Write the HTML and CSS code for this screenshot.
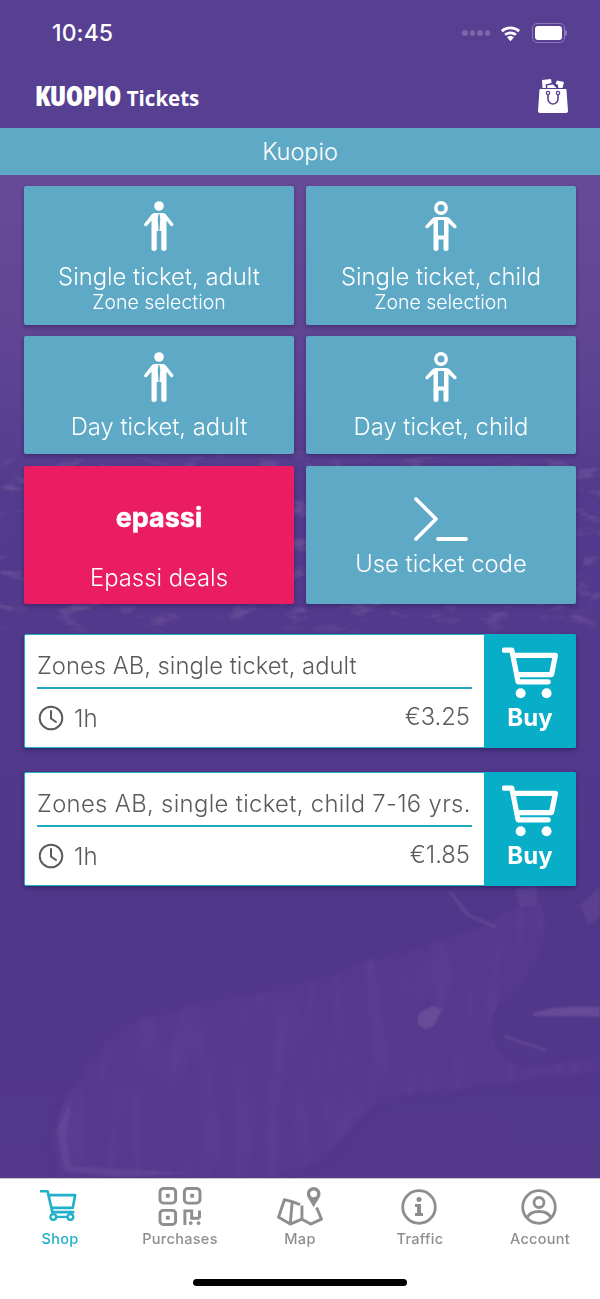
FILE: index.html
```html
<!DOCTYPE html>
<html lang="en">
<head>
<meta charset="utf-8">
<title>Kuopio Tickets</title>
<link rel="stylesheet" href="styles.css">
</head>
<body>
<svg width="0" height="0" class="defs">
  <defs>
    <symbol id="adult" viewBox="0 0 32 50">
      <circle cx="16" cy="5" r="4.800" fill="#fff"/>
      <path fill-rule="evenodd" d="M12.500 12h7c1.700 0 3 .8 4 2.200l6.500 8.300c.6.800.5 1.900-.3 2.400s-1.800.4-2.400-.3L23.500 19.500V48c0 1.200-1 2-2.500 2s-2.700-.8-2.700-2V30h-4.600v18c0 1.200-1 2-2.700 2S8.500 49.200 8.500 48V19.500l-4.300 5.100c-.6.7-1.600.8-2.400.3s-.9-1.600-.3-2.400l6.500-8.300c1-1.400 2.300-2.200 4-2.200zM15.500 13l-.8 5 .8 12h1l.8-12-.8-5z" fill="#fff"/>
    </symbol>
    <symbol id="child" viewBox="0 0 32 50">
      <circle cx="16" cy="7" r="5.200" fill="none" stroke="#fff" stroke-width="3.400"/>
      <path fill-rule="evenodd" d="M11 16h10c1.800 0 3.200.7 4.200 2l6 6.500c.6.800.5 1.800-.2 2.400s-1.700.5-2.300-.2L23.500 22v26c0 1.200-1 2-2.500 2s-2.500-.8-2.500-2v-9.500h-5V48c0 1.200-1 2-2.500 2s-2.500-.8-2.500-2V22L3.300 26.700c-.6.700-1.600.8-2.300.2s-.8-1.600-.2-2.400l6-6.500c1-1.300 2.400-2 4.200-2zM13 19v15.500h6V19z" fill="#fff"/>
    </symbol>
    <symbol id="cart" viewBox="0 0 54 50">
      <path d="M2 3h7.500l6 30.500h29" fill="none" stroke="currentColor" stroke-width="5" stroke-linecap="round" stroke-linejoin="round"/>
      <path d="M11 8h40.500l-3.700 18.500H14.500" fill="none" stroke="currentColor" stroke-width="5" stroke-linejoin="round"/>
      <circle cx="18" cy="44.500" r="4.800" fill="currentColor"/>
      <circle cx="43" cy="44.500" r="4.800" fill="currentColor"/>
    </symbol>
    <symbol id="clock" viewBox="0 0 26 26">
      <circle cx="13" cy="13" r="11.300" fill="none" stroke="currentColor" stroke-width="2"/>
      <path d="M13 6v7.500l5 3.500" fill="none" stroke="currentColor" stroke-width="2" stroke-linecap="round"/>
    </symbol>
  </defs>
</svg>
<div class="app">
  <svg class="backdrop" viewBox="0 0 600 1299" preserveAspectRatio="none" aria-hidden="true">
    <defs>
      <linearGradient id="wash" x1="0" y1="0" x2="0" y2="1">
        <stop offset="0" stop-color="#573f92"/>
        <stop offset=".14" stop-color="#684b98"/>
        <stop offset=".3" stop-color="#5c4391"/>
        <stop offset=".38" stop-color="#543a8c"/>
        <stop offset=".7" stop-color="#51378a"/>
        <stop offset="1" stop-color="#53388a"/>
      </linearGradient>
      <linearGradient id="bandfade" x1="0" y1="0" x2="0" y2="1">
        <stop offset="0" stop-color="#fff" stop-opacity="0"/>
        <stop offset=".15" stop-color="#fff"/>
        <stop offset=".85" stop-color="#fff"/>
        <stop offset="1" stop-color="#fff" stop-opacity="0"/>
      </linearGradient>
      <mask id="bandmask"><rect x="0" y="440" width="600" height="200" fill="url(#bandfade)"/></mask>
      <filter id="town" x="0" y="0" width="1" height="1" color-interpolation-filters="sRGB">
        <feTurbulence type="fractalNoise" baseFrequency="0.035 0.08" numOctaves="3" seed="7"/>
        <feColorMatrix values="0 0 0 0 .47  0 0 0 0 .37  0 0 0 0 .63  4 0 0 0 -2.200"/>
      </filter>
      <filter id="grain" x="0" y="0" width="1" height="1" color-interpolation-filters="sRGB">
        <feTurbulence type="fractalNoise" baseFrequency="0.06 0.012" numOctaves="2" seed="3"/>
        <feColorMatrix values="0 0 0 0 .37  0 0 0 0 .25  0 0 0 0 .59  2 0 0 0 -.9"/>
        <feComposite in2="SourceAlpha" operator="in"/>
        <feGaussianBlur stdDeviation="1"/>
      </filter>
      <filter id="soft"><feGaussianBlur stdDeviation="1"/></filter>
      <filter id="softer"><feGaussianBlur stdDeviation="3"/></filter>
    </defs>
    <rect width="600" height="1299" fill="url(#wash)"/>
    <rect x="0" y="440" width="600" height="200" filter="url(#town)" mask="url(#bandmask)" opacity=".6"/>
    <path filter="url(#softer)" fill="#573b8f" opacity=".8" d="M62 1178c-12-30-12-60 18-100 20-30 35-50 55-56 40-14 70-22 102-25 35-4 60-15 96-20 20-8 30-20 50-17 30-12 60-18 96-30 15-15 40-25 57-30 20 20 0 70-24 90-15 14-30 30-15 60 8 18 40 20 60 14l43-5v12c-30 2-70 8-102 12-35 6-75 8-115 16-20 8-40 40-60 60-20 10-40 14-55 19z"/>
    <path filter="url(#grain)" fill="#fff" d="M62 1178c-12-30-12-60 18-100 20-30 35-50 55-56 40-14 70-22 102-25 35-4 60-15 96-20 20-8 30-20 50-17 30-12 60-18 96-30 15-15 40-25 57-30 20 20 0 70-24 90-15 14-30 30-15 60 8 18 40 20 60 14l43-5v12c-30 2-70 8-102 12-35 6-75 8-115 16-20 8-40 40-60 60-20 10-40 14-55 19z"/>
    <g filter="url(#soft)" fill="#6f549c" opacity=".7">
      <path d="M418 1014l14-8 10 3-8 17-8 3-8-4z"/>
      <path d="M533 1013c22-7 45-7 67-6v10c-22-1-45 0-67-1z"/>
      <path d="M505 1035l42 14-1 3-42-14z" opacity=".7"/>
      <path d="M57 1130l14-30-4 36 4 30 120 7-70 4-56-6-6-28z" opacity=".6"/>
      <path d="M450 890l20 24 28 12-3 3-30-14-16-22z" opacity=".7"/>
      <path d="M515 890l24-8-3 22-16 4zM580 905l20-18v30l-12 8z" opacity=".5"/>
    </g>
  </svg>

  <header class="top">
    <div class="status">
      <span class="time">10:45</span>
      <div class="status-icons">
        <span class="dots"><i></i><i></i><i></i><i></i></span>
        <svg class="wifi" viewBox="0 0 22 16" aria-hidden="true">
          <path d="M11 16l-3.300-3.900a5 5 0 0 1 6.600 0z" fill="#fff"/>
          <path d="M5.800 9.700a8 8 0 0 1 10.400 0M2.700 6.200a12.500 12.500 0 0 1 16.600 0" fill="none" stroke="#fff" stroke-width="2.600"/>
        </svg>
        <span class="battery"><b></b></span>
      </div>
    </div>
    <div class="brandbar">
      <div class="brand"><span class="brand-big">KUOPIO</span><span class="brand-small">Tickets</span></div>
      <svg class="bag" viewBox="0 0 30 34" aria-hidden="true">
        <path d="M4 1l9-1 .5 4-6 1.500.5 3.500H4.500zM15 5.500l-6 1 .5 2.500h9zM19 1.500l7 1.500-1.500 6H20.500l-.8-3.500-2.200-.5z" fill="#fff"/>
        <path d="M2.500 10h25c.5 0 1 .4 1 1l1.500 21c0 1.200-.8 2-2 2H2c-1.200 0-2-.8-2-2l1.500-21c0-.6.500-1 1-1z" fill="#fff"/>
        <circle cx="10" cy="14" r="1.700" fill="none" stroke="#573f92" stroke-width="1.200"/>
        <circle cx="20" cy="14" r="1.700" fill="none" stroke="#573f92" stroke-width="1.200"/>
        <path d="M10 15.500v4.500a5 5 0 0 0 10 0v-4.500" fill="none" stroke="#573f92" stroke-width="1.600"/>
      </svg>
    </div>
    <div class="region">Kuopio</div>
  </header>

  <main class="content">
    <section class="grid">
      <a class="card card-tall">
        <svg class="person"><use href="#adult"/></svg>
        <span class="card-title">Single ticket, adult</span>
        <span class="card-sub">Zone selection</span>
      </a>
      <a class="card card-tall">
        <svg class="person"><use href="#child"/></svg>
        <span class="card-title">Single ticket, child</span>
        <span class="card-sub">Zone selection</span>
      </a>
      <a class="card card-short">
        <svg class="person"><use href="#adult"/></svg>
        <span class="card-title">Day ticket, adult</span>
      </a>
      <a class="card card-short">
        <svg class="person"><use href="#child"/></svg>
        <span class="card-title">Day ticket, child</span>
      </a>
      <a class="card card-epassi">
        <span class="epassi-logo">epassi</span>
        <span class="card-title">Epassi deals</span>
      </a>
      <a class="card card-code">
        <svg class="prompt" viewBox="0 0 56 46" aria-hidden="true">
          <path d="M3 3l20 20L3 43M25 43h28" fill="none" stroke="#fff" stroke-width="3.800" stroke-linecap="round" stroke-linejoin="round"/>
        </svg>
        <span class="card-title">Use ticket code</span>
      </a>
    </section>

    <section class="tickets">
      <article class="ticket">
        <div class="ticket-body">
          <div class="ticket-name">Zones AB, single ticket, adult</div>
          <div class="ticket-meta">
            <svg class="clock"><use href="#clock"/></svg>
            <span class="duration">1h</span>
            <span class="price">€3.25</span>
          </div>
        </div>
        <button class="buy"><svg class="buy-cart"><use href="#cart"/></svg><span>Buy</span></button>
      </article>
      <article class="ticket">
        <div class="ticket-body">
          <div class="ticket-name ticket-name-long">Zones AB, single ticket, child 7-16 yrs.</div>
          <div class="ticket-meta">
            <svg class="clock"><use href="#clock"/></svg>
            <span class="duration">1h</span>
            <span class="price">€1.85</span>
          </div>
        </div>
        <button class="buy"><svg class="buy-cart"><use href="#cart"/></svg><span>Buy</span></button>
      </article>
    </section>
  </main>

  <nav class="tabbar">
    <div class="tabs">
      <a class="tab tab-active">
        <svg class="tab-icon tab-cart" viewBox="0 0 40 34" aria-hidden="true">
          <path d="M1 2h7l5 22h22" fill="none" stroke="currentColor" stroke-width="2.800" stroke-linecap="round" stroke-linejoin="round"/>
          <path d="M9 6h28l-2.500 13.500H12" fill="none" stroke="currentColor" stroke-width="2.800" stroke-linejoin="round"/>
          <circle cx="14" cy="29" r="3" fill="none" stroke="currentColor" stroke-width="2.400"/>
          <circle cx="32" cy="29" r="3" fill="none" stroke="currentColor" stroke-width="2.400"/>
          <path d="M17 29h12" stroke="currentColor" stroke-width="2.400"/>
        </svg>
        <span>Shop</span>
      </a>
      <a class="tab">
        <svg class="tab-icon tab-qr" viewBox="0 0 44 40" aria-hidden="true">
          <g fill="none" stroke="currentColor" stroke-width="3">
            <rect x="1.500" y="1.500" width="16" height="15" rx="3.500"/>
            <rect x="26.500" y="1.500" width="16" height="15" rx="3.500"/>
            <rect x="1.500" y="24" width="16" height="14.500" rx="3.500"/>
            <path d="M27 39V24.500h7V32h8M42 24v8"/>
          </g>
          <g fill="currentColor">
            <rect x="7.500" y="7" width="4" height="4" rx="1"/>
            <rect x="32.500" y="7" width="4" height="4" rx="1"/>
            <rect x="7.500" y="29.500" width="4" height="4" rx="1"/>
            <circle cx="33" cy="37" r="2"/><circle cx="41" cy="37" r="2"/>
          </g>
        </svg>
        <span>Purchases</span>
      </a>
      <a class="tab">
        <svg class="tab-icon tab-map" viewBox="0 0 46 40" aria-hidden="true">
          <path d="M15 15L7 13 1 31l12 7 12-5 9 5 11-5-5-12M15 15l-2 23M25 19v14M15 15l8 3" fill="none" stroke="currentColor" stroke-width="3" stroke-linejoin="round"/>
          <path fill-rule="evenodd" d="M37 0a7 7 0 0 1 7 7c0 4-4 8-7 14-3-6-7-10-7-14a7 7 0 0 1 7-7zm0 3.500a3.500 3.500 0 1 0 0 7 3.500 3.500 0 0 0 0-7z" fill="currentColor"/>
        </svg>
        <span>Map</span>
      </a>
      <a class="tab">
        <svg class="tab-icon tab-round" viewBox="0 0 36 36" aria-hidden="true">
          <circle cx="18" cy="18" r="16.300" fill="none" stroke="currentColor" stroke-width="2.800"/>
          <circle cx="18" cy="10.500" r="2.500" fill="currentColor"/>
          <path d="M14 15h6v9h2v3h-8v-3h2v-6h-2z" fill="currentColor"/>
        </svg>
        <span>Traffic</span>
      </a>
      <a class="tab">
        <svg class="tab-icon tab-round" viewBox="0 0 36 36" aria-hidden="true">
          <circle cx="18" cy="18" r="16.300" fill="none" stroke="currentColor" stroke-width="2.800"/>
          <circle cx="18" cy="13.500" r="5" fill="none" stroke="currentColor" stroke-width="2.800"/>
          <path d="M6 29c2-5 7-6.500 12-6.500S28 24 30 29" fill="none" stroke="currentColor" stroke-width="2.800"/>
        </svg>
        <span>Account</span>
      </a>
    </div>
    <div class="home-bar"></div>
  </nav>
</div>
</body>
</html>
```

FILE: styles.css
```css
* { box-sizing: border-box; }
html, body { margin: 0; padding: 0; }
body { font-family: "Inter", "Liberation Sans", sans-serif; color: #fff; }
.defs { position: absolute; }

.app {
  position: relative;
  width: 600px;
  height: 1299px;
  display: flex;
  flex-direction: column;
  overflow: hidden;
}
.backdrop { position: absolute; inset: 0; width: 600px; height: 1299px; }

.top { position: relative; background: #573f92; }
.status {
  height: 64px;
  padding: 2px 31px 0 52px;
  display: flex;
  align-items: center;
  justify-content: space-between;
}
.time { font-size: 23px; font-weight: 500; line-height: 1; letter-spacing: .1px; }
.status-icons { display: flex; align-items: center; margin-right: 4px; }
.dots { display: flex; gap: 2px; margin-right: 9px; }
.dots i { width: 5.500px; height: 5.500px; border-radius: 50%; background: #7c67a9; }
.wifi { width: 23px; height: 18px; margin-right: 10px; }
.battery {
  position: relative;
  width: 33px;
  height: 20px;
  border: 1px solid #8b79b5;
  border-radius: 5px;
  padding: 2px;
  display: flex;
}
.battery b { flex: 1; background: #fff; border-radius: 3px; }
.battery::after {
  content: "";
  position: absolute;
  right: -3px;
  top: 6px;
  width: 2px;
  height: 6px;
  background: #8b79b5;
  border-radius: 0 2px 2px 0;
}

.brandbar {
  height: 64px;
  display: flex;
  align-items: center;
  justify-content: space-between;
  padding: 0 32px 0 35px;
}
.brand {
  display: flex;
  align-items: baseline;
  gap: 6px;
  margin-top: -3px;
  font-family: "Open Sans", sans-serif;
  white-space: nowrap;
  line-height: 1;
}
.brand-big { font-size: 28px; font-weight: 800; font-stretch: 75%; letter-spacing: -.6px; }
.brand-small { font-size: 20.500px; font-weight: 700; }
.bag { width: 30px; height: 34px; margin-top: -1px; }

.region {
  height: 47px;
  background: #5ea9c6;
  font-size: 23.500px;
  font-weight: 300;
  line-height: 47px;
  text-align: center;
}

.content { position: relative; flex: 1; padding: 11px 24px 0; min-height: 0; }
.grid {
  display: grid;
  grid-template-columns: 270px 270px;
  grid-template-rows: 139px 117px 138px;
  gap: 12px;
}
.card {
  display: flex;
  flex-direction: column;
  align-items: center;
  background: #5ea9c6;
  border-radius: 2px;
  box-shadow: 0 2px 4px rgba(30, 20, 70, .45);
  font-weight: 300;
}
.card-short { margin-top: -1px; }
.person { width: 32px; height: 50px; display: block; }
.card-tall .person { margin-top: 15px; }
.card-short .person { margin-top: 16px; }
.card-title { font-size: 23.800px; line-height: 28px; margin-top: 12px; white-space: nowrap; }
.card-sub { font-size: 19.500px; line-height: 22px; white-space: nowrap; }
.card-short .card-title { margin-top: 11px; }
.card-epassi { background: #ea1d62; }
.epassi-logo {
  font-size: 27px;
  font-weight: 700;
  line-height: 32px;
  margin-top: 36px;
  -webkit-text-stroke: .5px #fff;
}
.card-epassi .card-title { margin-top: 30px; }
.prompt { width: 56px; height: 46px; margin-top: 30px; }
.card-code .card-title { margin-top: 8px; }

.tickets { display: flex; flex-direction: column; gap: 24px; margin-top: 30px; }
.ticket {
  height: 114px;
  display: flex;
  background: #fff;
  border: 1px solid #1fb0cb;
  border-radius: 2px;
  box-shadow: 0 2px 4px rgba(20, 20, 70, .5);
}
.ticket-body { flex: 1; min-width: 0; padding: 0 12px; color: #5b5b5b; font-weight: 300; }
.ticket-name {
  height: 54px;
  font-size: 23.800px;
  line-height: 61px;
  border-bottom: 2px solid #1fa9c2;
  white-space: nowrap;
}
.ticket-name-long { letter-spacing: .35px; }
.ticket-meta { display: flex; align-items: center; height: 58px; padding-right: 2px; }
.clock { width: 26px; height: 26px; margin-left: 1px; color: #5b5b5b; }
.duration { font-size: 24px; margin-left: 10px; }
.price { font-size: 23.800px; margin-left: auto; margin-top: -4px; }
.buy {
  width: 92px;
  border: 0;
  padding: 0;
  margin: -1px -1px -1px 0;
  background: #08adc8;
  color: #fff;
  display: flex;
  flex-direction: column;
  align-items: center;
  font-family: inherit;
  font-size: 24px;
  font-weight: 700;
  border-radius: 0 2px 2px 0;
}
.buy-cart { width: 56px; height: 52px; margin-top: 13px; margin-left: -1px; }
.buy span { line-height: 30px; margin-top: 4px; }

.tabbar {
  position: relative;
  height: 121px;
  background: #fff;
  border-top: 1px solid #c9c3d3;
  display: flex;
  flex-direction: column;
  align-items: center;
}
.tabs { display: grid; grid-template-columns: repeat(5, 120px); width: 600px; height: 89px; }
.tab {
  display: flex;
  flex-direction: column;
  align-items: center;
  color: #8e8e8e;
  font-size: 14.500px;
  font-weight: 500;
  letter-spacing: .3px;
}
.tab-active { color: #1fb0cb; }
.tab-icon { display: block; }
.tab > span { position: absolute; top: 51px; line-height: 18px; }
.tab-cart { width: 38px; height: 33px; margin-top: 10px; margin-left: -3px; }
.tab-qr { width: 44px; height: 39px; margin-top: 8px; }
.tab-map { width: 46px; height: 39px; margin-top: 8px; }
.tab-round { width: 36px; height: 36px; margin-top: 10px; margin-left: -2px; }
.home-bar { width: 214px; height: 7px; border-radius: 4px; background: #000; margin-top: 11px; }
```
